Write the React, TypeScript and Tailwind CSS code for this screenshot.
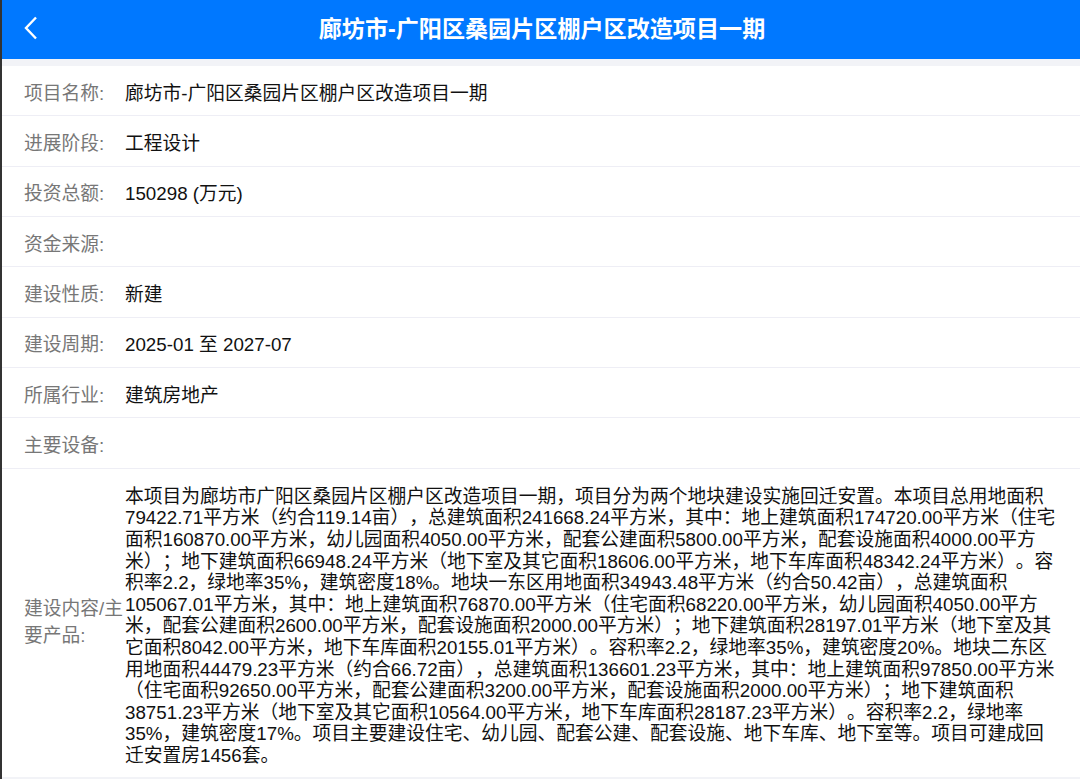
const rows: [string, string][] = [
  ["项目名称:", "廊坊市-广阳区桑园片区棚户区改造项目一期"],
  ["进展阶段:", "工程设计"],
  ["投资总额:", "150298 (万元)"],
  ["资金来源:", ""],
  ["建设性质:", "新建"],
  ["建设周期:", "2025-01 至 2027-07"],
  ["所属行业:", "建筑房地产"],
  ["主要设备:", ""],
];
const body = "本项目为廊坊市广阳区桑园片区棚户区改造项目一期，项目分为两个地块建设实施回迁安置。本项目总用地面积79422.71平方米（约合119.14亩），总建筑面积241668.24平方米，其中：地上建筑面积174720.00平方米（住宅面积160870.00平方米，幼儿园面积4050.00平方米，配套公建面积5800.00平方米，配套设施面积4000.00平方米）；地下建筑面积66948.24平方米（地下室及其它面积18606.00平方米，地下车库面积48342.24平方米）。容积率2.2，绿地率35%，建筑密度18%。地块一东区用地面积34943.48平方米（约合50.42亩），总建筑面积105067.01平方米，其中：地上建筑面积76870.00平方米（住宅面积68220.00平方米，幼儿园面积4050.00平方米，配套公建面积2600.00平方米，配套设施面积2000.00平方米）；地下建筑面积28197.01平方米（地下室及其它面积8042.00平方米，地下车库面积20155.01平方米）。容积率2.2，绿地率35%，建筑密度20%。地块二东区用地面积44479.23平方米（约合66.72亩），总建筑面积136601.23平方米，其中：地上建筑面积97850.00平方米（住宅面积92650.00平方米，配套公建面积3200.00平方米，配套设施面积2000.00平方米）；地下建筑面积38751.23平方米（地下室及其它面积10564.00平方米，地下车库面积28187.23平方米）。容积率2.2，绿地率35%，建筑密度17%。项目主要建设住宅、幼儿园、配套公建、配套设施、地下车库、地下室等。项目可建成回迁安置房1456套。";
const font = "font-['Liberation_Sans','Noto_Sans_CJK_SC',sans-serif] [text-spacing-trim:space-all]";
export default function App() {
  return (
    <div className={`flex h-[779px] w-[1080px] overflow-hidden bg-white ${font}`}>
      <div className="w-[2px] shrink-0 bg-[#333333]" />
      <div className="flex flex-1 flex-col bg-[#f2f3f7]">
        <header className="flex h-[59px] shrink-0 items-center bg-[#0078ff] pl-[22px] text-white">
          <svg className="mb-[3px]" width="14" height="24" viewBox="0 0 14 24" fill="none" stroke="currentColor" strokeWidth="2.4"><path d="M12 1.5 2 12l10 10.5" /></svg>
          <h1 className="flex-1 pr-[34px] text-center text-[23.1px] font-bold">廊坊市-广阳区桑园片区棚户区改造项目一期</h1>
        </header>
        <main className="mt-[7px] bg-white">
          {rows.map(([k, v]) => (
            <div key={k} className="flex h-[50.35px] items-center border-b border-[#eeeef5] pt-[6px] text-[18.75px]">
              <div className="w-[123px] pl-[22px] text-[#777777]">{k}</div>
              <div className="text-[#111111]">{v}</div>
            </div>
          ))}
          <div className="flex h-[308px] items-center text-[18.75px] leading-[21.6px]">
            <div className="w-[123px] shrink-0 pl-[22px] leading-[26.5px] text-[#777777]">建设内容/主要产品:</div>
            <div className="w-[933px] pt-[7px] text-[#111111]">{body}</div>
          </div>
        </main>
      </div>
    </div>
  );
}
